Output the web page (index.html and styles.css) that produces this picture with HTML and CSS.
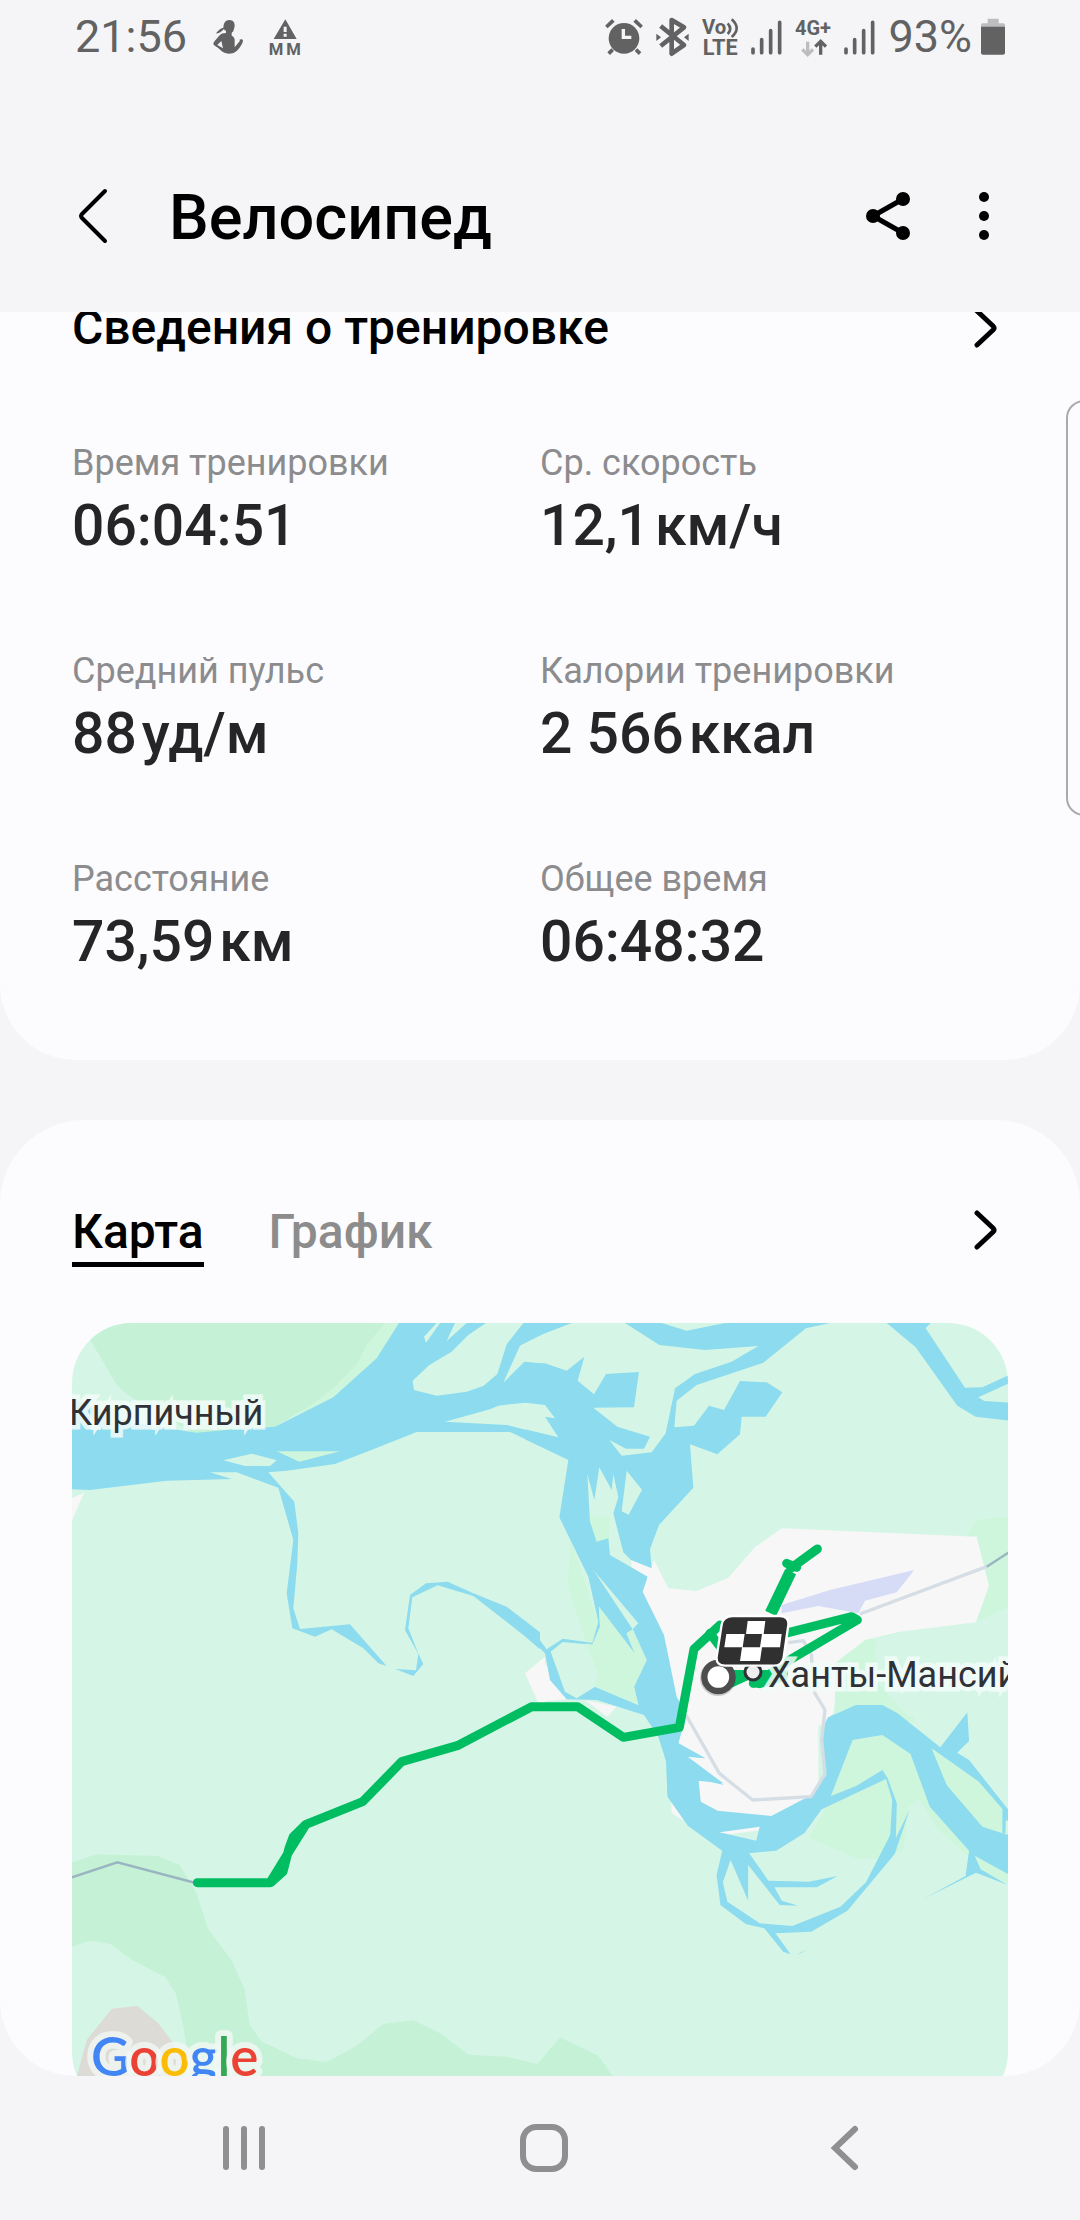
FILE: index.html
```html
<!DOCTYPE html>
<html lang="ru">
<head>
<meta charset="utf-8">
<meta name="viewport" content="width=device-width, initial-scale=1">
<title>Велосипед</title>
<link rel="stylesheet" href="styles.css">
</head>
<body>
<div class="app">
  <div class="status">
    <div class="status-side status-left">
      <span class="status-text">21:56</span>
      <svg class="person" width="30" height="36" viewBox="485 55 90 108" aria-hidden="true">
        <path d="M534 58c12 0 17 9 16 19l-4 15-5 4v9c6 3 9 7 9 13v22l16-20c-4-4 0-3 0-3 4-3 9-1 9 4-1 6-8 20-20 31-8 6-14 7-22 7-12 0-20-5-29-14-9-8-17-10-18-15 0-6 7-12 12-18 7-9 12-14 20-14l6-1v-6l-7-5c-8 8-14 13-23 12 4-7 13-15 22-17 1-14 6-23 18-23z"/>
        <path class="cut" d="M510 121l-12 12 17 10z"/>
      </svg>
      <svg class="warning" width="32" height="36" viewBox="653 57 94 108" aria-hidden="true">
        <path d="M701 58l34 59h-69z"/>
        <path class="cut" d="M696 80h9v16h-9zM696 101h9v9h-9z"/>
        <text x="651" y="165" font-size="50" font-weight="700">M</text>
        <text x="704" y="165" font-size="50" font-weight="700">M</text>
      </svg>
    </div>
    <div class="status-side status-right">
      <svg width="38" height="38" viewBox="69 52 114 114" aria-hidden="true">
        <circle cx="126" cy="113" r="46"/>
        <path class="bar10" d="M73 79l21-20M179 79l-21-20M92 147l-12 12M162 147l12 12"/>
        <path class="notch" d="M124 85v25h24"/>
      </svg>
      <svg width="33" height="38" viewBox="216 51 99 114" aria-hidden="true">
        <path class="bar13" d="M230 75l70 57-37 26V57l37 22-70 56"/>
        <path d="M217 98l14 11-14 11zM314 98l-14 11 14 11z"/>
      </svg>
      <svg width="36" height="38" viewBox="357 52 108 114" aria-hidden="true">
        <text x="357" y="101" font-size="61" font-weight="700">Vo</text>
        <path class="arc" d="M434 68q15 16 0 32M446 56q30 27 0 53"/>
        <text x="359" y="162" font-size="65" font-weight="700">LTE</text>
      </svg>
      <svg width="31" height="38" viewBox="506 52 93 114" aria-hidden="true">
        <path class="bar11" d="M512 145v11M538 117v39M565 90v66M592 65v91"/>
      </svg>
      <svg width="36" height="38" viewBox="635 52 108 114" aria-hidden="true">
        <text x="635" y="104" font-size="60" font-weight="700">4G+</text>
        <path class="arrow faint" d="M673 123v38M657 146l16 16 16-16"/>
        <path class="arrow" d="M712 162v-40M696 138l16-16 16 16"/>
      </svg>
      <svg width="31" height="38" viewBox="506 52 93 114" aria-hidden="true">
        <path class="bar11" d="M512 145v11M538 117v39M565 90v66M592 65v91"/>
      </svg>
      <span class="status-text">93%</span>
      <svg class="battery" width="24" height="38" viewBox="1203 52 72 114" aria-hidden="true">
        <path class="pale" d="M1223 54h33v14h14q5 0 5 5v6h-72v-6q0-5 5-5h15z"/>
        <path d="M1203 78h72v78q0 6-6 6h-60q-6 0-6-6z"/>
      </svg>
    </div>
  </div>

  <header class="bar">
    <button class="icon-button" type="button" aria-label="Назад">
      <svg width="32" height="60" viewBox="0 0 32 60"><path class="line4" d="M28 5L5 28q-2 2 0 4l23 23"/></svg>
    </button>
    <h1 class="title">Велосипед</h1>
    <button class="icon-button" type="button" aria-label="Поделиться">
      <svg width="44" height="50" viewBox="0 0 44 50"><path class="line5" d="M37 8L7 25l30 17"/><circle cx="37" cy="8" r="7"/><circle cx="7" cy="25" r="7"/><circle cx="37" cy="42" r="7"/></svg>
    </button>
    <button class="icon-button" type="button" aria-label="Ещё">
      <svg width="12" height="50" viewBox="0 0 12 50"><circle cx="6" cy="6" r="5"/><circle cx="6" cy="25" r="5"/><circle cx="6" cy="44" r="5"/></svg>
    </button>
  </header>

  <main class="content">
    <section class="card details">
      <a class="card-head" href="#details">
        <h2 class="heading">Сведения о тренировке</h2>
        <svg class="chevron" width="24" height="40" viewBox="0 0 24 40" aria-hidden="true"><path class="line5" d="M3 3l16 15q2 2 0 4L3 37"/></svg>
      </a>
      <dl class="stats">
        <div><dt>Время тренировки</dt><dd>06:04:51</dd></div>
        <div><dt>Ср. скорость</dt><dd>12,1<span class="unit">км/ч</span></dd></div>
        <div><dt>Средний пульс</dt><dd>88<span class="unit">уд/м</span></dd></div>
        <div><dt>Калории тренировки</dt><dd>2 566<span class="unit">ккал</span></dd></div>
        <div><dt>Расстояние</dt><dd>73,59<span class="unit">км</span></dd></div>
        <div><dt>Общее время</dt><dd>06:48:32</dd></div>
      </dl>
    </section>

    <section class="card route-card">
      <div class="card-head tabs">
        <button class="tab active" type="button">Карта</button>
        <button class="tab" type="button">График</button>
        <a class="tabs-more" href="#map" aria-label="Открыть карту">
          <svg class="chevron" width="24" height="40" viewBox="0 0 24 40"><path class="line5" d="M3 3l16 15q2 2 0 4L3 37"/></svg>
        </a>
      </div>
      <div class="map" id="map">
        <svg class="map-canvas" viewBox="72 1323 936 789" preserveAspectRatio="xMidYMin slice" role="img" aria-label="Карта маршрута">
          <!-- woodland -->
          <g transform="translate(60 1310) scale(.33333)">
            <path class="grass" d="M975 39h50L950 150 820 265 735 305 700 310 820 235 892 162 920 105z"/>
            <path class="wood" d="M60 39h915L920 105 892 162 820 235 755 285 645 350 410 375 210 260 170 225 92 92z"/>
            <path class="city" d="M36 565l36-17-36 84zM1395 1090l60-50v140h-20z"/>
          </g>
          <g transform="translate(60 1680) scale(.33333)">
            <path class="wood" d="M36 547L110 523 294 528 359 555 409 638 444 746 516 842 554 929 569 1034 604 1084 710 1134 800 1146 885 1100 970 1032 1060 1020 1145 1062 1225 1124 1340 1130 1432 1151 1500 1072 1615 1127 1660 1190V1320H380L382 1120 370 1040 348 942 316 892 216 840 151 792 89 782 36 800z"/>
            <path class="rock" d="M45 1210l35-130 75-94 78-8 62 52 70 92v100z"/>
          </g>
          <!-- grass and town -->
          <g transform="translate(530 1310) scale(.33333)">
            <path class="grass" d="M122 690L205 935 187 998 165 990 113 825zM172 620h65v80h-40zM1305 680l35-48 60-12 40 6v264l-102 47-330 50h32l-7 45 60 55 60 40v110H915V1060z"/>
            <path class="base" d="M1038 1000l75-35 225-28 102-47v330h-305L1035 1110z"/>
            <path class="city" d="M303 750L365 770 372 750 415 835 500 843 595 803 675 712 755 655 1340 680 1377 827 1338 937 1110 965 1005 990 915 1060V1170L910 1210 865 1250V1430L775 1550 540 1580 425 1510 410 1130 320 900zM0 1090l35-42 55 75 20 45-80 7zM165 1170l95 20-28 30z"/>
          </g>
          <g transform="translate(530 1680) scale(.35070 .33333)">
            <path class="grass" d="M858 348l62-168 85-15 80 57 55 158 112 132v20l-97-92-43-82-32 22-15 130-65 25h-70l-135-62 37-67zM1145 205l135 100 67 82 16 80-80-20-100-130zM1252 512l111 70v30l-90-45z"/>
          </g>
          <!-- water -->
          <g transform="translate(60 1310) scale(.33333)">
            <path class="water" d="M36 262L120 300 200 335 410 368 500 360 645 350 820 262 950 145 1017 39H1130L1092 80 1098 98 1140 39H1185L1160 93 1220 39H1278L1225 75 1175 125 1108 165 1058 212 1062 240 1130 257 1220 245 1270 228 1312 192 1340 103 1390 39H1440V75L1380 107 1330 218 1393 155 1440 160V408L1350 366H1070L940 418 825 462 680 482 625 487 703 575 715 670 712 760 700 895 720 957 870 943 980 1068 955 1060 910 1015 815 958 765 980 697 955 680 850 700 690 655 533 530 487H450L515 507 320 512 90 540 36 538zM1005 1077L1068 1081 1075 1032 1035 960 1050 855 1098 820 1163 815 1240 850 1340 890 1440 967V1018L1390 975 1240 858 1133 826 1057 862 1045 955 1073 1025 1090 1062 1060 1098z"/>
            <path class="base" d="M490 451l85-20 75 20-20 17h-75zM1155 335l135-37 25-11 80-9 65 20v78l-120-31z"/>
            <path class="grass" d="M650 424h190l-122 31z"/>
          </g>
          <g transform="translate(530 1310) scale(.33333)">
            <path class="water" d="M-15 39L125 39 40 72-15 98zM-15 158L45 160 110 182 163 140 143 212 192 253 228 192 327 186 312 292 190 293 262 350 360 380 342 416 288 416 238 390 275 437 365 427 407 370 435 235 495 192 605 155 685 108 525 120 388 105 285 39 395 39 470 62 585 39 900 39 828 55 700 158 500 225 440 272 433 352 492 347 537 287 582 300 630 213 710 217 757 247 707 320 635 320 630 373 562 433 480 403 490 533 387 645 360 718 365 775 303 750 280 727 250 610 265 562 250 492 245 540 208 472 193 570 172 492 180 635 200 695 235 685 240 735 353 800 338 845 402 975 440 1160 470 1215 445 1300 525 1345 470 1338 580 1420 505 1412 508 1445 412 1445 410 1360 385 1280 342 1215 200 1170 110 1168 60 1110 45 1030-15 968-15 930 50 1018 98 986 187 998 205 935 175 800 88 622 115 450-15 388z"/>
            <path class="base" d="M62 1025L98 996 187 1004 210 950 207 890 315 1032 290 970 308 958 350 1050 312 1130 325 1185 195 1130 140 1165 105 1145z"/>
            <path class="grass" d="M168 1000L187 1004 210 950 207 890 315 1032 290 970 308 958 350 1050 312 1130 325 1185 195 1130 205 1090z"/>
            <path class="base" d="M-15 278L45 285 75 325 45 320 85 382-15 358zM290 482l46 57-40 75-21-10zM190 780l135 160-17 18z"/>
            <path class="water" d="M1070 39l87 73 125 175 55 33 100 12v-54l-74-5-18-11 92-42v-25l-80 37-52 1-118-178 15-16z"/>
          </g>
          <g transform="translate(530 1680) scale(.35070 .33333)">
            <path class="water" fill-rule="evenodd" d="M370 160L388 245 392 350 450 437 548 512 532 585 543 675 615 732 668 745 722 815 743 823 700 760 802 755 905 692 1040 522 1082 390 1043 475 1046 370 1020 295 1005 270 930 318 858 348 920 180 1005 165 1085 222 1140 380 1252 512 1242 588 1120 658 1272 578 1362 615 1285 568 1268 527 1366 584 1366 465 1347 460 1290 440 1188 315 1145 205 1280 305 1347 387 1347 460 1355 460 1357 420 1366 425 1366 392 1252 240 1218 218 1252 183 1247 97 1170 202 1048 100 1005 75 930 75 850 112 832 150 830 180 845 270 812 340 688 408 535 392 487 365 480 297 552 315 447 230 500 235 423 190 423 150zM540 457L655 440 645 482zM572 540L622 662 622 555 712 675 765 677 718 662 697 622 818 622 877 588 795 605 680 602 625 520 702 512 782 460 832 388 1015 297 1033 360 1027 465 958 607 885 680 748 738 655 730 563 665 550 607z"/>
            <path class="water" d="M762 826l28-18-20 10z"/>
          </g>
          <!-- airport and roads -->
          <g transform="translate(530 1310) scale(.33333)">
            <path class="airport" d="M755 885l145-45 253-60-53 67-95 25-20 38-120-22-110 22z"/>
            <path class="road" d="M990 912l380-142M775 998l45-6 25 43v80l10 35 30 50-10 90 10 102-42 68-175 10-100-80-100-175"/>
            <path class="track" d="M1370 770l70-45"/>
          </g>
          <g transform="translate(60 1680) scale(.33333)"><path class="track" d="M36 592l136-45 235 62"/></g>
          <!-- recorded track -->
          <g class="track-run" transform="translate(60 1680) scale(.33333)">
            <path d="M412 608h220l37-33 18-70 13-35 38-37 170-68 117-120 167-48 223-117h138l137 92 168-30 44-235 78-72M632 605l58-95 48-77"/>
          </g>
          <g class="track-run" transform="translate(530 1310) scale(.33333)">
            <path class="wide" d="M722 910l60-125"/>
            <path d="M782 775l80-58M770 760l30 12M775 968l190-48 17 10-200 118-100 70M540 970l30 40M600 1118l80-33M670 1120l90-22"/>
            <path class="fill" d="M605 1080h170l-5 30-80 25-25-5v-25l-60 28z"/>
          </g>
          <g class="label" font-size="36">
            <circle class="town" cx="753" cy="1672" r="8"/>
            <text x="69" y="1425">Кирпичный</text>
            <text x="768" y="1687">Ханты-Мансийск</text>
          </g>
          <!-- start and finish -->
          <g transform="translate(530 1310) scale(.33333)">
            <circle class="start-shadow" cx="564" cy="1104" r="54"/>
            <circle class="start" cx="565" cy="1101" r="42"/>
            <path class="flag" d="M608 918h142c18 0 27 11 25 27l-14 97c-3 18-13 25-30 25H585c-18 0-27-10-25-27l15-96c3-18 13-26 33-26z"/>
            <path class="check" d="M653 933h53l-5 39h54l-5 40h-54l-6 41h-60l6-41h-53l6-40h59zM644 972l-6 40h52l6-40z" fill-rule="evenodd"/>
          </g>
          <text class="google" x="91" y="2076"><tspan class="g-blue">G</tspan><tspan class="g-red">o</tspan><tspan class="g-yellow">o</tspan><tspan class="g-blue">g</tspan><tspan class="g-green">l</tspan><tspan class="g-red">e</tspan></text>
        </svg>
      </div>
    </section>
    <div class="edge-handle"></div>
  </main>

  <nav class="nav">
    <button class="nav-button" type="button" aria-label="Недавние">
      <svg width="44" height="48" viewBox="0 0 44 48"><path d="M4 5v38M22 5v38M40 5v38"/></svg>
    </button>
    <button class="nav-button" type="button" aria-label="Главный экран">
      <svg width="48" height="48" viewBox="0 0 48 48"><rect x="3" y="3" width="42" height="42" rx="13"/></svg>
    </button>
    <button class="nav-button" type="button" aria-label="Назад">
      <svg width="32" height="48" viewBox="0 0 32 48"><path d="M27 5L7 24l20 19"/></svg>
    </button>
  </nav>
</div>
</body>
</html>
```
FILE: styles.css
```css
* { box-sizing: border-box; }

body {
  margin: 0;
  background: #f5f5f8;
  color: #000;
  font-family: Roboto, "Noto Sans", sans-serif;
}

h1, h2, dl, dd { margin: 0; }
a { color: inherit; text-decoration: none; }
svg { display: block; flex: none; }

button {
  margin: 0;
  padding: 0;
  border: 0;
  background: none;
  color: inherit;
  font: inherit;
}

.app {
  display: flex;
  flex-direction: column;
  height: 100vh;
  overflow: hidden;
}

/* status bar */
.status {
  display: flex;
  flex: none;
  justify-content: space-between;
  align-items: center;
  height: 74px;
  padding: 0 75px;
  color: #626262;
}
.status-side { display: flex; align-items: center; }
.status-left { gap: 26px; }
.status-right { gap: 13px; }
.status svg { overflow: visible; fill: currentColor; stroke: none; }
.status-text { font-size: 45px; line-height: 72px; }
.status .battery { margin-left: -4px; }
.status .cut { fill: #f5f5f8; }
.status .pale { fill: #bdbdbf; }
.status .notch { fill: none; stroke: #f5f5f8; stroke-width: 10; }
.status .bar10, .status .bar11, .status .bar13, .status .arc, .status .arrow { fill: none; stroke: currentColor; }
.bar10 { stroke-width: 11; }
.bar11 { stroke-width: 11; stroke-linecap: round; }
.bar13 { stroke-width: 14; stroke-linejoin: round; }
.arc { stroke-width: 8; }
.arrow { stroke-width: 10; }
.status .faint { stroke: #bdbdbf; }

/* app bar */
.bar {
  display: flex;
  flex: none;
  align-items: center;
  height: 238px;
  padding: 46px 90px 0 77px;
}
.icon-button { display: flex; align-items: center; }
.title {
  flex: 1;
  margin-left: 60px;
  padding-top: 4px;
  font-size: 63px;
  font-weight: 500;
  line-height: 72px;
}
.icon-button + .icon-button { margin-left: 68px; }
.line4, .line5 { fill: none; stroke: #000; stroke-linecap: round; stroke-linejoin: round; }
.line4 { stroke-width: 4; }
.line5 { stroke-width: 5; }

/* scrolled content */
.content {
  position: relative;
  flex: 1;
  min-height: 0;
  overflow: hidden;
  border-radius: 0 0 76px 76px;
}
.card { padding: 0 72px; background: #fcfcfe; }
.card-head { display: flex; align-items: center; }
.heading { flex: 1; font-size: 48px; font-weight: 500; line-height: 56px; }
.chevron { margin-right: 10px; }

.details {
  margin-top: -12px;
  padding-bottom: 84px;
  border-radius: 0 0 76px 76px;
}
.stats {
  display: grid;
  grid-template-columns: 1fr 1fr;
  row-gap: 90px;
  margin-top: 86px;
}
.stats dt {
  margin-bottom: 8px;
  color: #8c8c8e;
  font-size: 36px;
  line-height: 42px;
}
.stats dd {
  color: #252528;
  font-size: 57px;
  font-weight: 500;
  line-height: 68px;
}
.unit { margin-left: 5px; }

.route-card {
  margin-top: 60px;
  padding-top: 84px;
  padding-bottom: 72px;
  border-radius: 84px;
}
.tabs { gap: 65px; align-items: flex-start; }
.tab {
  padding-bottom: 2px;
  border-bottom: 5px solid transparent;
  color: #8c8c8c;
  font-size: 48px;
  font-weight: 500;
  line-height: 56px;
}
.tab.active { border-color: #000; color: #000; }
.tabs-more { margin: 6px 0 0 auto; }

/* map */
.map {
  height: 789px;
  margin-top: 56px;
  overflow: hidden;
  border-radius: 60px;
  background: #d5f6e6;
}
.map-canvas { width: 100%; height: 100%; }
.base { fill: #d5f6e6; }
.wood { fill: #c5f2d6; }
.grass { fill: #cef6dc; }
.rock { fill: #dddbd6; }
.city { fill: #f7f7f7; }
.water { fill: #8ddbee; }
.airport { fill: #d6dcf6; }
.road { fill: none; stroke: #d5dde5; stroke-width: 10; stroke-linejoin: round; }
.track { fill: none; stroke: #9ab5c2; stroke-width: 7; }
.track-run { fill: none; stroke: #00bd62; stroke-width: 27; stroke-linejoin: round; stroke-linecap: round; }
.track-run .wide { stroke-width: 36; stroke-linecap: butt; }
.track-run .fill { fill: #00bd62; stroke: none; }
.label text {
  fill: #303136;
  stroke: #f3fcf9;
  stroke-opacity: .85;
  stroke-width: 9;
  paint-order: stroke;
}
.town { fill: #eee; stroke: #303136; stroke-width: 3; }
.start-shadow { fill: #000; opacity: .18; }
.start { fill: #fff; stroke: #4d4d4d; stroke-width: 19; }
.flag { fill: #303030; stroke: #fff; stroke-width: 7; }
.check { fill: #fff; }
.google {
  font-family: Lato, sans-serif;
  font-size: 53px;
  font-weight: 600;
  stroke: #f3f8f5;
  stroke-opacity: .8;
  stroke-width: 12;
  stroke-linejoin: round;
  paint-order: stroke;
}
.g-blue { fill: #4285f4; }
.g-red { fill: #ea4335; }
.g-yellow { fill: #fbbc05; }
.g-green { fill: #34a853; }

.edge-handle {
  position: absolute;
  top: 88px;
  right: -8px;
  width: 22px;
  height: 416px;
  border: 2px solid #aaaaac;
  border-radius: 18px 0 0 18px;
  background: #fcfcfe;
}

/* system navigation */
.nav {
  display: flex;
  flex: none;
  align-items: center;
  justify-content: center;
  height: 144px;
  padding-left: 8px;
}
.nav-button { display: flex; justify-content: center; width: 28%; }
.nav svg { fill: none; stroke: #8f8f8f; stroke-width: 6; stroke-linecap: round; }
```
